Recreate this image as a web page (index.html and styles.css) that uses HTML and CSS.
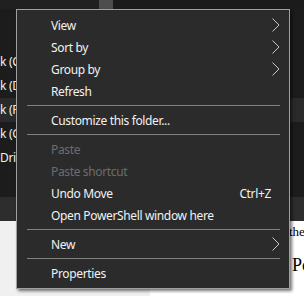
FILE: index.html
```html
<!DOCTYPE html>
<html lang="en">
<head>
    <meta charset="UTF-8">
    <meta name="viewport" content="width=device-width, initial-scale=1.0">
    <title>Context Menu</title>
    <link rel="stylesheet" href="styles.css">
</head>
<body>
    <!-- Explorer window behind the menu -->
    <div class="scene">
        <div class="top-pane">
            <div class="scroll-strip">
                <div class="scroll-thumb"></div>
                <div class="scroll-gap"></div>
            </div>
            <div class="drive-list">
                <div class="drive-row">k (C:)</div>
                <div class="drive-row">k (D:)</div>
                <div class="drive-row selected">k (F:)</div>
                <div class="drive-row">k (G:)</div>
                <div class="drive-row">Drive (H:)</div>
            </div>
        </div>
        <div class="tab-band"></div>
        <div class="bottom-pane">
            <div class="nav-pane"></div>
            <div class="doc-pane">
                <p class="doc-line">the</p>
                <p class="doc-line big">Po</p>
            </div>
        </div>
    </div>

    <!-- Context menu -->
    <div class="context-menu">
        <div class="menu-item">
            <span class="item-label">View</span>
            <svg class="chevron" width="8" height="14" viewBox="0 0 8 14"><polyline points="0.5,0.5 7,7 0.5,13.5" /></svg>
        </div>
        <div class="menu-item">
            <span class="item-label">Sort by</span>
            <svg class="chevron" width="8" height="14" viewBox="0 0 8 14"><polyline points="0.5,0.5 7,7 0.5,13.5" /></svg>
        </div>
        <div class="menu-item">
            <span class="item-label">Group by</span>
            <svg class="chevron" width="8" height="14" viewBox="0 0 8 14"><polyline points="0.5,0.5 7,7 0.5,13.5" /></svg>
        </div>
        <div class="menu-item">
            <span class="item-label">Refresh</span>
        </div>
        <div class="separator"></div>
        <div class="menu-item">
            <span class="item-label">Customize this folder...</span>
        </div>
        <div class="separator"></div>
        <div class="menu-item disabled">
            <span class="item-label">Paste</span>
        </div>
        <div class="menu-item disabled">
            <span class="item-label">Paste shortcut</span>
        </div>
        <div class="menu-item">
            <span class="item-label">Undo Move</span>
            <span class="shortcut">Ctrl+Z</span>
        </div>
        <div class="menu-item">
            <span class="item-label">Open PowerShell window here</span>
        </div>
        <div class="separator"></div>
        <div class="menu-item">
            <span class="item-label">New</span>
            <svg class="chevron" width="8" height="14" viewBox="0 0 8 14"><polyline points="0.5,0.5 7,7 0.5,13.5" /></svg>
        </div>
        <div class="separator"></div>
        <div class="menu-item">
            <span class="item-label">Properties</span>
        </div>
    </div>
</body>
</html>
```

FILE: styles.css
```css
body {
    margin: 0;
    width: 304px;
    height: 296px;
    overflow: hidden;
    background: #1c1c1c;
    font-family: 'Noto Sans', 'Open Sans', sans-serif;
    position: relative;
}

.scene {
    display: grid;
    grid-template-rows: 197px 24px 75px;
    height: 296px;
}

.top-pane {
    background: #1c1c1c;
}

.scroll-strip {
    display: flex;
    height: 9px;
    background: #202020;
}

.scroll-thumb {
    width: 14px;
    margin-left: 99px;
    background: #4d4d4d;
}

.scroll-gap {
    flex: 1;
    background: #1b1b1b;
}

.drive-list {
    margin-top: 41px;
}

.drive-row {
    height: 24px;
    line-height: 24px;
    font-size: 12px;
    letter-spacing: -0.3px;
    color: #f0f0f0;
    white-space: nowrap;
}

.drive-row.selected {
    background: #2a2a2a;
}

.tab-band {
    background: #2d2d2d;
}

.bottom-pane {
    display: flex;
}

.nav-pane {
    width: 150px;
    background: #f0f0f0;
}

.doc-pane {
    flex: 1;
    min-width: 0;
    background: #ffffff;
    padding: 3px 0 0 139px;
    font-family: 'Liberation Serif', serif;
    color: #000;
    white-space: nowrap;
    overflow: hidden;
}

.doc-line {
    margin: 0;
    font-size: 13px;
    line-height: 15px;
}

.doc-line.big {
    font-size: 18px;
    line-height: 21px;
    margin: 16px 0 0 3px;
}

/* menu */
.context-menu {
    position: absolute;
    left: 16px;
    top: 9px;
    width: 272px;
    padding: 4px 0 4px;
    background: #2b2b2b;
    border: 1px solid #a0a0a0;
    box-shadow: 2px 2px 3px rgba(0, 0, 0, 0.55);
}

.menu-item {
    display: flex;
    align-items: center;
    height: 22px;
    padding: 0 9px 0 34px;
    font-size: 12px;
    letter-spacing: -0.35px;
    color: #f2f2f2;
}

.menu-item.disabled {
    color: #6d6d6d;
}

.item-label {
    flex: 1;
    white-space: nowrap;
}

.shortcut {
    margin-right: 9px;
}

.chevron {
    display: block;
}

.chevron polyline {
    fill: none;
    stroke: #c8c8c8;
    stroke-width: 1;
}

.separator {
    height: 1px;
    margin: 3px 9px 3px 10px;
    background: #808080;
}
```
